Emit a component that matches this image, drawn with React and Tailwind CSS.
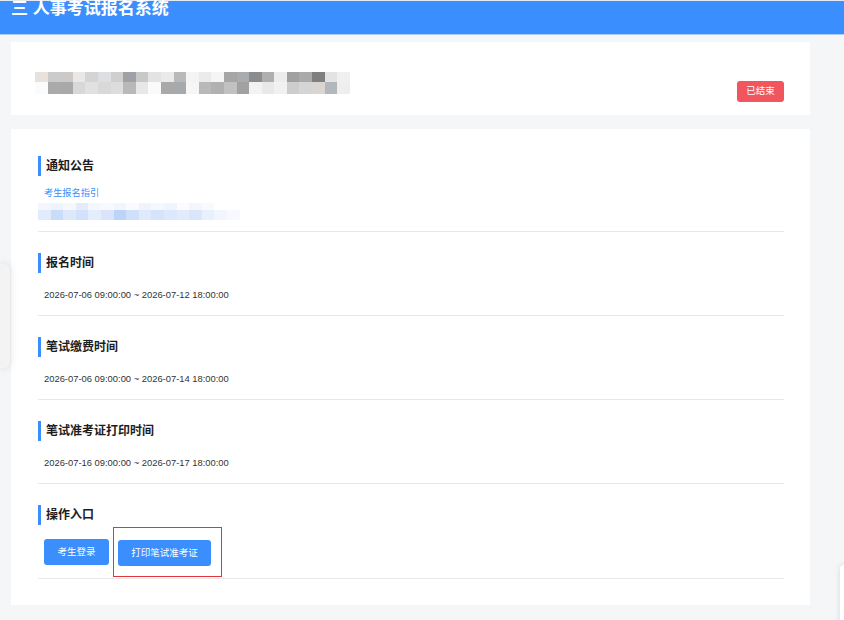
import React from 'react';

const titleTop = [
  'bg-[#e9e2dc]', 'bg-[#cbcbcb]', 'bg-[#cdc9c6]', 'bg-[#e8e8e8]', 'bg-[#d4d4d4]',
  'bg-[#dddfe2]', 'bg-[#cfcfcf]', 'bg-[#9ea2a6]', 'bg-[#c8c8c8]', 'bg-[#e3e3e3]',
  'bg-[#eaeaea]', 'bg-[#b9b9b9]', 'bg-[#f4f4f4]', 'bg-[#ebebeb]', 'bg-[#f5f5f5]',
  'bg-[#a6a6a6]', 'bg-[#a9acaf]', 'bg-[#8c8c8c]', 'bg-[#afafaf]', 'bg-[#ececec]',
  'bg-[#a0a0a0]', 'bg-[#aaaaaa]', 'bg-[#7f7f7f]', 'bg-[#e3e3e3]', 'bg-[#f0f0f0]',
];

const titleBottom = [
  'bg-[#fbfbfb]', 'bg-[#aaaaaa]', 'bg-[#a9a9a9]', 'bg-[#d8d8d8]', 'bg-[#e1e1e1]',
  'bg-[#d9d9d9]', 'bg-[#dddddd]', 'bg-[#b9b9b9]', 'bg-[#e7e7e7]', 'bg-[#fafafa]',
  'bg-[#a9a9a9]', 'bg-[#a7aaac]', 'bg-[#f6f6f6]', 'bg-[#b9b9b9]', 'bg-[#b1b1b1]',
  'bg-[#c1c1c1]', 'bg-[#a1a1a1]', 'bg-[#f3f3f3]', 'bg-[#e9e9e9]', 'bg-[#f1f1f1]',
  'bg-[#cdcdcd]', 'bg-[#d5d5d5]', 'bg-[#d9d5d1]', 'bg-[#b2b7bc]', 'bg-[#eeeeee]',
];

const noticeTop = [
  'bg-[#f3f6fd]', 'bg-[#eef3fc]', 'bg-[#f6f8fe]', 'bg-[#e4ecfb]', 'bg-[#f4f7fd]',
  'bg-[#f7f9fe]', 'bg-[#f1f5fd]', 'bg-[#fafbff]', 'bg-[#eef3fc]', 'bg-[#f5f8fe]',
  'bg-[#f0f4fd]', 'bg-[#fbfcff]', 'bg-[#f3f6fd]', 'bg-[#f8fafe]', 'bg-[#ffffff]',
  'bg-[#ffffff]',
];

const noticeBottom = [
  'bg-[#e1ebfc]', 'bg-[#c9dcf9]', 'bg-[#dde8fb]', 'bg-[#d3e2fa]', 'bg-[#e4edfc]',
  'bg-[#d8e5fb]', 'bg-[#bcd4f7]', 'bg-[#d0e0fa]', 'bg-[#e0eafc]', 'bg-[#d6e4fb]',
  'bg-[#dce8fb]', 'bg-[#e2ebfc]', 'bg-[#d9e6fb]', 'bg-[#e9f0fd]', 'bg-[#f1f5fe]',
  'bg-[#f7f9ff]',
];

const SectionTitle = ({ children }) => (
  <div className="h-[20px] flex items-center border-l-[3px] border-[#3b8efd] pl-[5px] text-[12px] font-bold text-[#1d1d1d] leading-none">
    {children}
  </div>
);

const TimeSection = ({ title, range }) => (
  <div className="pt-[21px] pb-[13px] border-b border-[#e8e8e8]">
    <SectionTitle>{title}</SectionTitle>
    <div className="mt-[15px] pl-[6px] text-[9.4px] leading-[14px] text-[#333]">{range}</div>
  </div>
);

const App = () => {
  return (
    <div className="relative min-h-[620px] overflow-hidden bg-[#f5f6f7] font-['Liberation_Sans','Noto_Sans_CJK_SC',sans-serif]">
      {/* Header */}
      <div className="h-[35px] bg-[#3b8efd] border-t border-[#e4eaf2] border-b border-b-[#acccfb] pl-[11px]">
        <div className="-mt-[1px] text-[17px] leading-[17px] font-bold text-white">三 人事考试报名系统</div>
      </div>

      <div className="pl-[11px] pr-[34px] pt-[7px] flex flex-col gap-[14px]">
        {/* Exam title card */}
        <div className="h-[73px] bg-white pl-[24px] pr-[26px] flex justify-between">
          <div className="mt-[30px] flex flex-col">
            <div className="flex">
              {titleTop.map((c, i) => <div key={i} className={`w-[12.6px] h-[10px] ${c}`} />)}
            </div>
            <div className="flex">
              {titleBottom.map((c, i) => <div key={i} className={`w-[12.6px] h-[12px] ${c}`} />)}
            </div>
          </div>
          <div className="self-end mb-[13px] h-[21px] w-[47px] rounded-[3px] bg-[#f1565f] text-white text-[9.5px] flex items-center justify-center">
            已结束
          </div>
        </div>

        {/* Detail card */}
        <div className="bg-white pt-[27px] pl-[27px] pr-[26px] pb-[26px]">
          <div className="pb-[11px] border-b border-[#e8e8e8]">
            <SectionTitle>通知公告</SectionTitle>
            <div className="mt-[10px] pl-[6px] text-[9.2px] leading-[14px] text-[#3b8efd]">考生报名指引</div>
            <div className="mt-[3px] flex flex-col">
              <div className="flex">
                {noticeTop.map((c, i) => <div key={i} className={`w-[12.6px] h-[7px] ${c}`} />)}
              </div>
              <div className="flex">
                {noticeBottom.map((c, i) => <div key={i} className={`w-[12.6px] h-[10px] ${c}`} />)}
              </div>
            </div>
          </div>

          <TimeSection title="报名时间" range="2026-07-06 09:00:00 ~ 2026-07-12 18:00:00" />
          <TimeSection title="笔试缴费时间" range="2026-07-06 09:00:00 ~ 2026-07-14 18:00:00" />
          <TimeSection title="笔试准考证打印时间" range="2026-07-16 09:00:00 ~ 2026-07-17 18:00:00" />

          <div className="pt-[21px] pb-[12px] border-b border-[#e8e8e8]">
            <SectionTitle>操作入口</SectionTitle>
            <div className="mt-[14px] pl-[6px] flex gap-[9px]">
              <button className="h-[26px] w-[65px] rounded-[3px] bg-[#3b8efd] text-white text-[9.5px]">考生登录</button>
              <div className="relative">
                <button className="h-[26px] w-[93px] rounded-[3px] bg-[#3b8efd] text-white text-[9.5px]">打印笔试准考证</button>
                <div className="absolute -left-[5px] -top-[12px] -right-[11px] -bottom-[11px] border border-[#e2343c]" />
              </div>
            </div>
          </div>
        </div>
      </div>

      {/* Side floating tabs */}
      <div className="absolute left-0 top-[264px] w-[10px] h-[104px] bg-[#f3f3f3] rounded-r-[6px] shadow-[0_0_8px_rgba(0,0,0,0.12)]" />
      <div className="absolute left-[840px] top-[565px] w-[10px] h-[60px] bg-white rounded-l-[4px] shadow-[0_0_6px_rgba(0,0,0,0.12)]" />
    </div>
  );
};

export default App;
